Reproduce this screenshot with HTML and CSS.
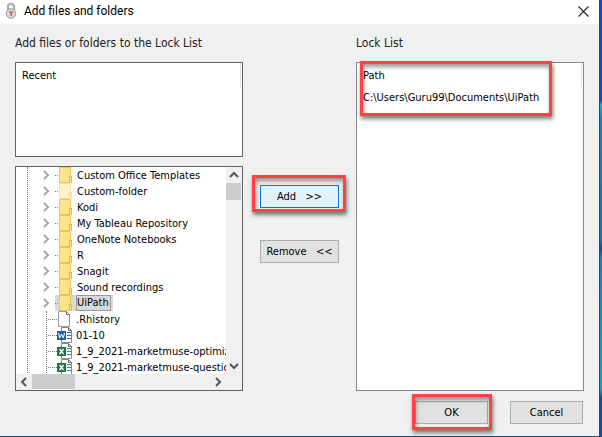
FILE: index.html
```html
<!DOCTYPE html>
<html lang="en">
<head>
    <meta charset="UTF-8">
    <meta name="viewport" content="width=device-width, initial-scale=1.0">
    <title>Add files and folders</title>
    <link rel="stylesheet" href="styles.css">
</head>
<body>
    <!-- Icons used by the tree rows -->
    <svg class="sprite" aria-hidden="true">
        <symbol id="icon-folder" viewBox="0 0 16 16">
            <path d="M1.500 .5h11v9h1v6h-12z" fill="#ffe28c" stroke="#ecc64d"/>
            <path d="M11.500 15.500v-6h2v6" fill="#ffe28c" stroke="#e3b93c"/>
        </symbol>
        <symbol id="icon-file" viewBox="0 0 16 16">
            <path d="M1.500 .5h8l3 3v12h-11z" fill="#fafafa" stroke="#999"/>
            <path d="M9.500 .5v3h3" fill="none" stroke="#777"/>
        </symbol>
        <symbol id="icon-word" viewBox="0 0 16 16">
            <path d="M4.500 .5h7l3 3v12h-10z" fill="#fff" stroke="#888"/>
            <path d="M11.500 .5v3h3" fill="none" stroke="#666"/>
            <path d="M10 5.500h4M10 8.500h4M10 11.500h4" stroke="#2b66b8"/>
            <path d="M0 4h9v9h-9z" fill="#1f5cb4"/>
            <path d="M1.500 6l1.200 5 1.800-4 1.800 4 1.200-5" fill="none" stroke="#fff"/>
        </symbol>
        <symbol id="icon-excel" viewBox="0 0 16 16">
            <path d="M4.500 .5h7l3 3v12h-10z" fill="#fff" stroke="#888"/>
            <path d="M11.500 .5v3h3" fill="none" stroke="#666"/>
            <path d="M10 5.500h4M10 8.500h4M10 11.500h4" stroke="#21a366"/>
            <path d="M0 4h9v9h-9z" fill="#107c41"/>
            <path d="M2.500 6l4 5M6.500 6l-4 5" fill="none" stroke="#fff" stroke-width="1.500"/>
        </symbol>
        <symbol id="icon-chevron" viewBox="0 0 8 10">
            <path d="M2 1l4 4-4 4" fill="none" stroke="currentColor" stroke-width="2"/>
        </symbol>
    </svg>

    <main class="dialog">
        <header class="titlebar">
            <svg class="app-icon" viewBox="0 0 12 16" aria-hidden="true">
                <path d="M3 7v-3a3 3 0 0 1 6 0v3" fill="none" stroke="#8a8a8a" stroke-width="2"/>
                <path d="M3 7v-3a3 3 0 0 1 6 0v3" fill="none" stroke="#ddd" stroke-width=".8"/>
                <circle cx="6" cy="10.500" r="4.800" fill="#d6d6d6" stroke="#999"/>
                <path d="M3.500 8.500h5l-1.500 2v2.500h-1.500v-2.500z" fill="#e84a4a"/>
            </svg>
            <h1 class="title">Add files and folders</h1>
            <button class="close-btn" aria-label="Close">
                <svg viewBox="0 0 11 11"><path d="M.5 .5l10 10M10.500 .5l-10 10" stroke="#222" stroke-width="1.100"/></svg>
            </button>
        </header>

        <div class="content">
            <section class="column">
                <h2 class="label">Add files or folders to the Lock List</h2>
                <div class="list recent">
                    <div class="list-head">Recent</div>
                </div>
                <div class="list tree">
                    <div class="tree-view">
                        <ul class="nodes">
                            <li class="node"><svg class="chevron"><use href="#icon-chevron"/></svg><span class="dots"></span><svg class="icon"><use href="#icon-folder"/></svg><span class="name">Custom Office Templates</span></li>
                            <li class="node"><svg class="chevron"><use href="#icon-chevron"/></svg><span class="dots"></span><svg class="icon faded"><use href="#icon-folder"/></svg><span class="name">Custom-folder</span></li>
                            <li class="node"><svg class="chevron"><use href="#icon-chevron"/></svg><span class="dots"></span><svg class="icon"><use href="#icon-folder"/></svg><span class="name">Kodi</span></li>
                            <li class="node"><svg class="chevron"><use href="#icon-chevron"/></svg><span class="dots"></span><svg class="icon"><use href="#icon-folder"/></svg><span class="name">My Tableau Repository</span></li>
                            <li class="node"><svg class="chevron"><use href="#icon-chevron"/></svg><span class="dots"></span><svg class="icon"><use href="#icon-folder"/></svg><span class="name">OneNote Notebooks</span></li>
                            <li class="node"><svg class="chevron"><use href="#icon-chevron"/></svg><span class="dots"></span><svg class="icon"><use href="#icon-folder"/></svg><span class="name">R</span></li>
                            <li class="node"><svg class="chevron"><use href="#icon-chevron"/></svg><span class="dots"></span><svg class="icon"><use href="#icon-folder"/></svg><span class="name">Snagit</span></li>
                            <li class="node"><svg class="chevron"><use href="#icon-chevron"/></svg><span class="dots"></span><svg class="icon"><use href="#icon-folder"/></svg><span class="name">Sound recordings</span></li>
                            <li class="node"><svg class="chevron"><use href="#icon-chevron"/></svg><span class="selected"><span class="dots"></span><svg class="icon"><use href="#icon-folder"/></svg><span class="name">UiPath</span></span></li>
                            <li>
                                <ul class="files">
                                    <li class="node"><span class="dots"></span><svg class="icon"><use href="#icon-file"/></svg><span class="name">.Rhistory</span></li>
                                    <li class="node"><span class="dots"></span><svg class="icon"><use href="#icon-word"/></svg><span class="name">01-10</span></li>
                                    <li class="node"><span class="dots"></span><svg class="icon"><use href="#icon-excel"/></svg><span class="name">1_9_2021-marketmuse-optimiz</span></li>
                                    <li class="node"><span class="dots"></span><svg class="icon"><use href="#icon-excel"/></svg><span class="name">1_9_2021-marketmuse-questio</span></li>
                                </ul>
                            </li>
                        </ul>
                    </div>
                    <div class="scroll-y">
                        <button class="arrow" aria-label="Scroll up"><svg class="turn-up"><use href="#icon-chevron"/></svg></button>
                        <span class="thumb"></span>
                        <button class="arrow" aria-label="Scroll down"><svg class="turn-down"><use href="#icon-chevron"/></svg></button>
                    </div>
                    <div class="scroll-x">
                        <button class="arrow" aria-label="Scroll left"><svg class="turn-left"><use href="#icon-chevron"/></svg></button>
                        <span class="thumb"></span>
                        <button class="arrow" aria-label="Scroll right"><svg><use href="#icon-chevron"/></svg></button>
                    </div>
                </div>
            </section>

            <div class="actions">
                <button class="btn btn-add marked">Add &nbsp; &gt;&gt;</button>
                <button class="btn">Remove &nbsp; &lt;&lt;</button>
            </div>

            <section class="column">
                <h2 class="label">Lock List</h2>
                <div class="list lock-list">
                    <div class="list-head">Path</div>
                    <div class="list-item">C:\Users\Guru99\Documents\UiPath</div>
                    <div class="mark"></div>
                </div>
            </section>
        </div>

        <footer class="footer">
            <button class="btn marked">OK</button>
            <button class="btn">Cancel</button>
        </footer>
    </main>
</body>
</html>
```

FILE: styles.css
```css
* {
    box-sizing: border-box;
}
body {
    margin: 0;
    padding-right: 2px;
    min-height: 100vh;
    display: flex;
    background: linear-gradient(#0a4fc0 23%, #0fb0e0 24%, #1580d0 27%, #1272c8 55%, #0a48b8 57%, #1580d0 59%, #12a0d0 89%, #0a50a8 91%);
    font-family: "DejaVu Sans Condensed", "DejaVu Sans", sans-serif;
    font-size: 11px;
    color: #000;
}
ul {
    list-style: none;
    margin: 0;
    padding: 0;
}
button {
    font: inherit;
    color: inherit;
}
.sprite {
    position: absolute;
    width: 0;
    height: 0;
}
.dialog {
    flex: 1;
    display: flex;
    flex-direction: column;
    min-width: 0;
    background-color: #f0f0f0;
    border-right: 1px solid #14507c;
    border-bottom: 1px solid #14507c;
}
.titlebar {
    display: flex;
    align-items: center;
    height: 24px;
    padding: 0 10px 2px 5px;
    background-color: #fff;
}
.app-icon {
    width: 12px;
    height: 16px;
}
.title {
    flex: 1;
    margin: 0 0 0 7px;
    font: 12px Roboto, sans-serif;
}
.close-btn {
    display: flex;
    padding: 0;
    border: 0;
    background: none;
}
.close-btn svg {
    width: 11px;
    height: 11px;
}

/* Columns */
.content {
    flex: 1;
    display: grid;
    grid-template-columns: 1fr 79px 1fr;
    gap: 17px;
    padding: 0 15px;
}
.column {
    display: flex;
    flex-direction: column;
    min-width: 0;
}
.label {
    height: 38px;
    margin: 0;
    font-size: 12px;
    font-weight: normal;
    line-height: 38px;
    color: #222;
    white-space: nowrap;
}
.list {
    border: 1px solid #646464;
    background-color: #fff;
}
.list-head {
    height: 24px;
    margin-right: 1px;
    padding-left: 6px;
    border-right: 1px solid #e5e5e5;
    line-height: 26px;
}
.list-item {
    padding-left: 6px;
    line-height: 22px;
}
.recent {
    height: 95px;
    margin-bottom: 9px;
}
.lock-list {
    position: relative;
    flex: 1;
    border-color: #828790;
}

/* Folder tree */
.tree {
    flex: 1;
    display: grid;
    grid-template-columns: 1fr 16px;
    grid-template-rows: 207px 16px;
}
.tree-view {
    min-width: 0;
    overflow: hidden;
}
.nodes {
    margin-left: 11px;
    border-left: 1px dotted #777;
}
.node {
    display: flex;
    align-items: center;
    height: 16px;
    padding-left: 14px;
    white-space: nowrap;
}
.chevron {
    width: 8px;
    height: 10px;
    margin-right: 5px;
    color: #a6a6a6;
}
.dots {
    flex: none;
    width: 3px;
    border-top: 1px dotted #777;
}
.icon {
    flex: none;
    width: 16px;
    height: 16px;
}
.faded {
    opacity: .5;
}
.name {
    margin-left: 3px;
}
.selected {
    display: flex;
    align-items: center;
    padding-right: 2px;
    background-color: #d9d9d9;
}
.selected .name {
    margin-left: 2px;
    padding-right: 1px;
    border: 1px solid #999;
    line-height: 14px;
}
.files {
    margin-left: 18px;
    border-left: 1px dotted #777;
}
.files .node {
    padding-left: 1px;
}
.files .dots {
    width: 9px;
}

/* Scroll bars */
.scroll-y,
.scroll-x {
    display: flex;
    background-color: #f0f0f0;
}
.scroll-y {
    flex-direction: column;
}
.scroll-x {
    grid-column: 1 / -1;
    padding-right: 16px;
}
.thumb {
    background-color: #cdcdcd;
}
.scroll-y .thumb {
    height: 17px;
    margin-right: 1px;
}
.scroll-x .thumb {
    width: 43px;
    margin-bottom: 1px;
}
.arrow {
    display: flex;
    align-items: center;
    justify-content: center;
    width: 16px;
    height: 16px;
    padding: 0;
    border: 0;
    background: none;
    color: #555;
}
.arrow:last-child {
    margin-top: auto;
    margin-left: auto;
}
.arrow svg {
    width: 8px;
    height: 10px;
}
.turn-up {
    transform: rotate(-90deg);
}
.turn-down {
    transform: rotate(90deg);
}
.turn-left {
    transform: rotate(180deg);
}

/* Buttons */
.actions {
    display: flex;
    flex-direction: column;
    gap: 32px;
    padding-top: 161px;
}
.btn {
    height: 23px;
    padding: 0;
    border: 1px solid #adadad;
    background-color: #e1e1e1;
    white-space: nowrap;
}
.btn-add {
    border-color: #0078d7;
    background-color: #e5f1fb;
}
.footer {
    display: flex;
    justify-content: flex-end;
    gap: 22px;
    padding: 10px 16px 12px;
}
.footer .btn {
    width: 73px;
}

/* Red highlight frames */
.marked {
    position: relative;
}
.marked::after,
.mark {
    position: absolute;
    border: 3px solid #fd4344;
    box-shadow: 1px 3px 4px rgba(0, 0, 0, .5), inset 1px 3px 4px rgba(0, 0, 0, .4);
    pointer-events: none;
}
.marked::after {
    content: "";
    inset: -8px -5px -7px -4px;
}
.btn-add::after {
    inset: -11px -8px -5px -9px;
}
.mark {
    top: -2px;
    left: 3px;
    right: 31px;
    height: 55px;
}
```
